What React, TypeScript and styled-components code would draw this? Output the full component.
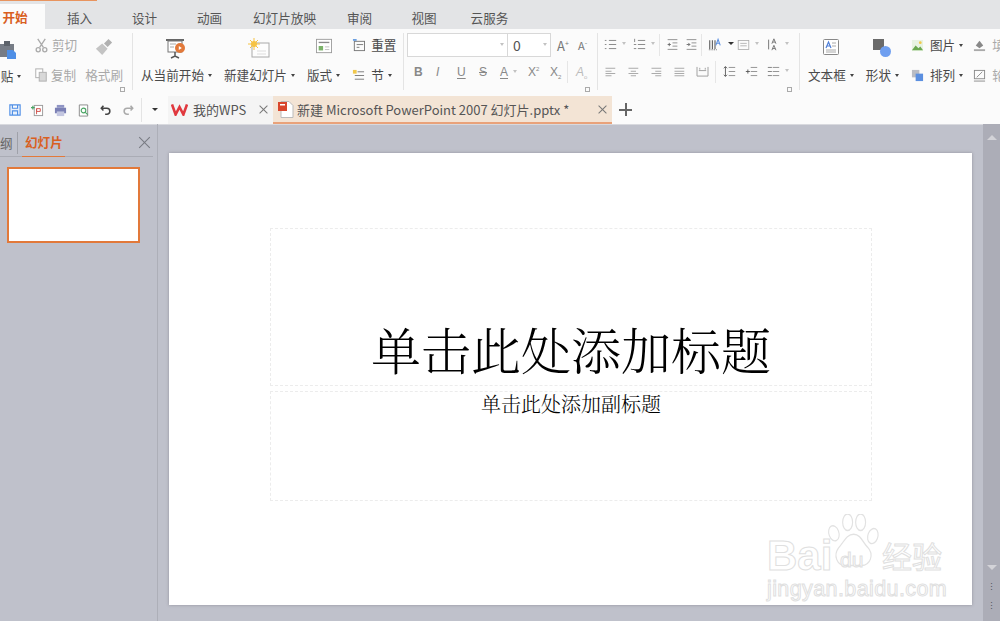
import styled, { createGlobalStyle } from "styled-components";

const cjk = `"Noto Sans CJK SC", "Liberation Sans", sans-serif`;

const GlobalStyle = createGlobalStyle`
  html, body {
    margin: 0;
    padding: 0;
    background: #bfc1cb;
  }
  * {
    box-sizing: border-box;
  }
`;

const menuTabs = [
  { label: "开始", width: 45, active: true },
  { label: "插入", width: 69 },
  { label: "设计", width: 61 },
  { label: "动画", width: 69 },
  { label: "幻灯片放映", width: 81 },
  { label: "审阅", width: 69 },
  { label: "视图", width: 60 },
  { label: "云服务", width: 71 },
];

function Glyph({ size = 16, children }: { size?: number; children: React.ReactNode }) {
  return (
    <svg width={size} height={size} viewBox="0 0 16 16" fill="none">
      {children}
    </svg>
  );
}

const ListIcon = ({ numbered }: { numbered?: boolean }) => (
  <Glyph size={13}>
    <g stroke="#8a8a8a" strokeWidth="1.2">
      <path d="M6 3h9M6 8h9M6 13h9" />
      <path d={numbered ? "M2 1v4M1 8h3M1 13h3" : "M1 3h2M1 8h2M1 13h2"} />
    </g>
  </Glyph>
);

const IndentIcon = ({ flip }: { flip?: boolean }) => (
  <Glyph size={13}>
    <g stroke="#8a8a8a" strokeWidth="1.1">
      <path d="M2 2h12M8 6h6M8 10h6M2 14h12" />
      <path d={flip ? "M6 8H2M4 6v4" : "M2 8h4M4 6l2 2-2 2"} stroke="#666" />
    </g>
  </Glyph>
);

const AlignIcon = ({ kind }: { kind: "left" | "center" | "right" | "full" }) => {
  const short = {
    left: "M2 7h8M2 13h8",
    center: "M5 7h7M5 13h7",
    right: "M7 7h8M7 13h8",
    full: "M2 7h13M2 13h13",
  }[kind];
  return (
    <Glyph size={12}>
      <path d={`M2 3h13M2 10h13 ${short}`} stroke="#999" strokeWidth="1.1" />
    </Glyph>
  );
};

const SpacingIcon = ({ variant }: { variant: number }) => (
  <Glyph size={13}>
    <g stroke="#8a8a8a" strokeWidth="1.1">
      <path d="M7 3h8M7 8h8M7 13h8" />
      {variant === 0 && <path d="M3 2v12M1 4l2-2 2 2M1 12l2 2 2-2" stroke="#555" />}
      {variant === 1 && <path d="M1 8h5M3.500 5.500v5" stroke="#555" />}
      {variant === 2 && <path d="M1 3h5M1 8h5M1 13h5" stroke="#777" />}
    </g>
  </Glyph>
);

export default function App() {
  return (
    <Page>
      <GlobalStyle />
      <MenuBar>
        {menuTabs.map((tab) => (
          <MenuTab key={tab.label} $width={tab.width} $active={tab.active}>
            {tab.label}
          </MenuTab>
        ))}
      </MenuBar>

      <Ribbon>
        <ClipboardGroup>
          <PasteColumn>
            <svg width="22" height="18" viewBox="0 0 22 18">
              <rect x="0" y="3" width="14" height="13" fill="#767c86" />
              <rect x="4" y="0" width="6" height="5" fill="#5c626a" />
              <path d="M7 9h6l3 3v6H7z" fill="#4f8fe6" />
            </svg>
            <LargeLabel>贴<Caret /></LargeLabel>
          </PasteColumn>
          <ClipColumn>
            <ClipRow>
              <svg width="15" height="15" viewBox="0 0 16 16" fill="none" stroke="#aaa" strokeWidth="1.4">
                <path d="M4 1l6 9M12 1L6 10" />
                <circle cx="4.500" cy="12.500" r="2.200" />
                <circle cx="11.500" cy="12.500" r="2.200" />
              </svg>
              <DimLabel>剪切</DimLabel>
            </ClipRow>
            <ClipRow>
              <svg width="14" height="14" viewBox="0 0 16 16" fill="#fff" stroke="#b5b5b5" strokeWidth="1.2">
                <rect x="2" y="1" width="8" height="10" />
                <rect x="6" y="5" width="8" height="10" fill="#d8d8d8" />
              </svg>
              <DimLabel>复制</DimLabel>
            </ClipRow>
          </ClipColumn>
          <BrushColumn>
            <svg width="18" height="18" viewBox="0 0 20 20">
              <path d="M1 12l7-6 6 6-6 7z" fill="#c4c4c4" />
              <path d="M10 6l5-5 4 4-5 5z" fill="#b0b0b0" />
            </svg>
            <DimLabel>格式刷</DimLabel>
          </BrushColumn>
          <Launcher />
        </ClipboardGroup>
        <Divider />

        <SlideGroup>
          <LargeButton>
            <svg width="22" height="22" viewBox="0 0 22 22" fill="none">
              <path d="M1 2h18" stroke="#666" strokeWidth="2" />
              <rect x="3" y="3" width="14" height="11" fill="#fff" stroke="#777" />
              <path d="M10 14v4M6 20l4-2 4 2" stroke="#555" strokeWidth="1.500" />
              <path d="M5 6h6M5 9h4" stroke="#aaa" />
              <circle cx="15" cy="10" r="5" fill="#e2793a" />
              <path d="M13.800 8l3 2-3 2z" fill="#fff" />
            </svg>
            <LargeLabel>从当前开始<Caret /></LargeLabel>
          </LargeButton>
          <LargeButton>
            <svg width="22" height="22" viewBox="0 0 22 22" fill="none">
              <rect x="4" y="5" width="17" height="14" fill="#fdfdfd" stroke="#aaa" />
              <path d="M9 13h9M9 16h9" stroke="#ddd" />
              <circle cx="6" cy="6" r="3" fill="#f6c343" />
              <path d="M6 0v12M0 6h12M2 2l8 8M10 2l-8 8" stroke="#f6c343" />
            </svg>
            <LargeLabel>新建幻灯片<Caret /></LargeLabel>
          </LargeButton>
          <LargeButton>
            <svg width="18" height="16" viewBox="0 0 20 18" fill="none">
              <rect x="1.500" y="1.500" width="17" height="15" fill="#fff" stroke="#999" />
              <path d="M4 5h12" stroke="#888" strokeWidth="1.500" />
              <rect x="4" y="9" width="5" height="5" fill="#7cb36a" />
              <path d="M11 10h5M11 13h5" stroke="#bbb" />
            </svg>
            <LargeLabel>版式<Caret /></LargeLabel>
          </LargeButton>
          <ClipColumn>
            <SmallRow>
              <svg width="13" height="13" viewBox="0 0 14 14" fill="none" stroke="#777">
                <rect x="2.500" y="2.500" width="11" height="10" />
                <path d="M5 6h7M5 9h3" />
                <path d="M1 1h4" stroke="#3f83d8" strokeWidth="1.500" />
              </svg>
              <PlainLabel>重置</PlainLabel>
            </SmallRow>
            <SmallRow>
              <svg width="13" height="13" viewBox="0 0 14 14" fill="none" stroke="#777">
                <rect x="1" y="1" width="4" height="4" fill="#f1c84c" stroke="none" />
                <path d="M6 3h7M3 7h10M3 11h10" />
              </svg>
              <PlainLabel>节<Caret /></PlainLabel>
            </SmallRow>
          </ClipColumn>
        </SlideGroup>
        <Divider />

        <FontGroup>
          <FontFirstRow>
            <FontBox>
              <FontName><SmallCaret /></FontName>
              <FontSize>0<SmallCaret /></FontSize>
            </FontBox>
            <GrowGlyph>A<sup>+</sup></GrowGlyph>
            <GrowGlyph $small>A<sup>-</sup></GrowGlyph>
          </FontFirstRow>
          <FontSecondRow>
            <FormatGlyph $w={22}><b>B</b></FormatGlyph>
            <FormatGlyph $w={21}><i>I</i></FormatGlyph>
            <FormatGlyph $w={22}><u>U</u></FormatGlyph>
            <FormatGlyph $w={21}><s>S</s></FormatGlyph>
            <FormatGlyph $w={28}><u>A</u><SmallCaret /></FormatGlyph>
            <FormatGlyph $w={22}>X<sup>2</sup></FormatGlyph>
            <FormatGlyph $w={17}>X<sub>2</sub></FormatGlyph>
            <ThinRule $gap={8} />
            <FormatGlyph $w={24} $light><i>A</i><sub>o</sub></FormatGlyph>
          </FontSecondRow>
          <Launcher />
        </FontGroup>
        <Divider />

        <ParagraphGroup>
          <ParagraphRow>
            <IconSlot $w={29}><ListIcon /><SmallCaret /></IconSlot>
            <IconSlot $w={26}><ListIcon numbered /><SmallCaret /></IconSlot>
            <ThinRule $gap={6} />
            <IconSlot $w={19}><IndentIcon flip /></IconSlot>
            <IconSlot $w={16}><IndentIcon /></IconSlot>
            <ThinRule $gap={6} />
            <IconSlot $w={29}>
              <svg width="14" height="15" viewBox="0 0 16 16">
                <path d="M2 3v10M5 3v10M8 3v10" stroke="#555" strokeWidth="1.200" />
                <path d="M1 14h9" stroke="#555" strokeDasharray="1 1" />
                <path d="M9 9l2.500-7 2.500 7M10 6.500h3" fill="none" stroke="#5b8fe0" strokeWidth="1.200" />
              </svg>
              <DarkCaret />
            </IconSlot>
            <IconSlot $w={30}>
              <svg width="13" height="12" viewBox="0 0 16 14" fill="none" stroke="#aaa">
                <rect x="1.500" y="1.500" width="13" height="11" />
                <path d="M4 5h8M4 8h8" />
              </svg>
              <SmallCaret />
            </IconSlot>
            <IconSlot $w={30}>
              <svg width="13" height="15" viewBox="0 0 16 16" fill="none" stroke="#777" strokeWidth="1.200">
                <path d="M2 2v12" />
                <path d="M6 7l2.500-6L11 7M7 5h3M6 15l2.500-6 2.500 6M7 13h3" />
              </svg>
              <SmallCaret />
            </IconSlot>
          </ParagraphRow>
          <ParagraphRow>
            <IconSlot $w={23}><AlignIcon kind="left" /></IconSlot>
            <IconSlot $w={23}><AlignIcon kind="center" /></IconSlot>
            <IconSlot $w={23}><AlignIcon kind="right" /></IconSlot>
            <IconSlot $w={23}><AlignIcon kind="full" /></IconSlot>
            <IconSlot $w={19}>
              <svg width="13" height="11" viewBox="0 0 14 12" fill="none" stroke="#999">
                <path d="M1 1v10h12V1M3 5h8M4 2v2M10 2v2" />
              </svg>
            </IconSlot>
            <ThinRule $gap={7} />
            <IconSlot $w={22}><SpacingIcon variant={0} /></IconSlot>
            <IconSlot $w={22}><SpacingIcon variant={1} /></IconSlot>
            <IconSlot $w={30}><SpacingIcon variant={2} /><SmallCaret /></IconSlot>
          </ParagraphRow>
          <Launcher />
        </ParagraphGroup>
        <Divider />

        <InsertGroup>
          <LargeButton>
            <svg width="18" height="18" viewBox="0 0 18 18" fill="none">
              <rect x="1.500" y="1.500" width="15" height="15" rx="1" fill="#fff" stroke="#888" />
              <path d="M4 10l2.500-6L9 10M5 8h3" stroke="#4f7fd8" strokeWidth="1.200" />
              <path d="M10 5h4M10 8h4M4 12h10M4 14h10" stroke="#aaa" />
            </svg>
            <LargeLabel>文本框<Caret /></LargeLabel>
          </LargeButton>
          <LargeButton>
            <svg width="20" height="20" viewBox="0 0 20 20">
              <rect x="1" y="1" width="11" height="11" fill="#6a6a6a" />
              <circle cx="13.500" cy="13.500" r="5.500" fill="#6f9ff0" />
            </svg>
            <LargeLabel>形状<Caret /></LargeLabel>
          </LargeButton>
          <ClipColumn>
            <SmallRow>
              <svg width="13" height="13" viewBox="0 0 14 14">
                <rect x="1" y="1" width="12" height="12" fill="#e8f3e2" />
                <path d="M1 12l4-5 3 3 2-2 3 4z" fill="#6aa84f" />
                <circle cx="10" cy="4" r="1.500" fill="#f1c84c" />
              </svg>
              <PlainLabel>图片<Caret /></PlainLabel>
            </SmallRow>
            <SmallRow>
              <svg width="13" height="13" viewBox="0 0 14 14">
                <rect x="1" y="1" width="8" height="8" fill="#b9bcc4" />
                <rect x="5" y="5" width="8" height="8" fill="#5b8fe0" />
              </svg>
              <PlainLabel>排列<Caret /></PlainLabel>
            </SmallRow>
          </ClipColumn>
          <ClippedColumn>
            <SmallRow>
              <svg width="13" height="13" viewBox="0 0 14 14">
                <path d="M3 7l4-5 4 5-4 3z" fill="#888" />
                <path d="M1 12h12" stroke="#aaa" strokeWidth="2" />
              </svg>
              <DimLabel>填充</DimLabel>
            </SmallRow>
            <SmallRow>
              <svg width="13" height="13" viewBox="0 0 14 14" fill="none" stroke="#888">
                <rect x="1.500" y="1.500" width="11" height="9" />
                <path d="M4 9l6-6M1 13h12" />
              </svg>
              <DimLabel>轮廓</DimLabel>
            </SmallRow>
          </ClippedColumn>
        </InsertGroup>
      </Ribbon>

      <DocBar>
        <QuickTools>
          <svg width="12" height="12" viewBox="0 0 14 14" fill="#e8f0fb" stroke="#4f8fe6" strokeWidth="1.300">
            <path d="M1 1h12v12H1zM4 1v4h6V1M4 13V8h6v5" />
          </svg>
          <svg width="13" height="13" viewBox="0 0 14 14" fill="none" stroke="#d0504a">
            <rect x="3.500" y="1.500" width="9" height="11" fill="#fff" stroke="#999" />
            <path d="M6 5h4v3H6zM6 5v6" />
            <path d="M0 4h4M2 2v4" stroke="#4aa564" strokeWidth="1.300" />
          </svg>
          <svg width="13" height="13" viewBox="0 0 14 14">
            <rect x="3" y="1" width="8" height="3" fill="#8f94c4" />
            <rect x="1" y="4" width="12" height="6" fill="#7b80b5" />
            <rect x="3" y="8" width="8" height="5" fill="#c3c6e0" />
          </svg>
          <svg width="13" height="13" viewBox="0 0 14 14" fill="none">
            <path d="M2.500 1h9v12h-9z" fill="#fff" stroke="#888" />
            <circle cx="7" cy="7" r="2.500" stroke="#4aa564" strokeWidth="1.200" />
            <path d="M9 9l2.500 2.500" stroke="#4aa564" strokeWidth="1.200" />
          </svg>
          <svg width="12" height="12" viewBox="0 0 14 14" fill="none" stroke="#444" strokeWidth="1.800">
            <path d="M4 2L1.500 5 4 7.500M2 5h6a3.500 3.500 0 0 1 0 7H6" />
          </svg>
          <svg width="12" height="12" viewBox="0 0 14 14" fill="none" stroke="#aaa" strokeWidth="1.800">
            <path d="M10 2l2.500 3L10 7.500M12 5H6a3.500 3.500 0 0 0 0 7h2" />
          </svg>
          <QuickRule />
          <QuickCaret />
        </QuickTools>
        <DocTab $width={105}>
          <svg width="17" height="13" viewBox="0 0 17 13">
            <path d="M1 1.500l3.600 10L8.500 4l3.900 7.500L16 1.500" fill="none" stroke="#e0383e" strokeWidth="2.600" />
          </svg>
          <DocTitle>我的WPS</DocTitle>
          <CloseMark />
        </DocTab>
        <DocTab $width={339} $active>
          <svg width="16" height="17" viewBox="0 0 16 17">
            <path d="M3 0.500h8l4 4v12H3z" fill="#fff" stroke="#bbb" />
            <rect x="0" y="1" width="9" height="9" fill="#d9462c" />
            <rect x="2" y="3" width="5" height="1.500" fill="#fff" />
          </svg>
          <DocTitle>新建 Microsoft PowerPoint 2007 幻灯片.pptx *</DocTitle>
          <CloseMark />
        </DocTab>
        <PlusMark />
      </DocBar>

      <Workspace>
        <Sidebar>
          <SideTabs>
            <OutlineTab>纲</OutlineTab>
            <SlidesTab>幻灯片</SlidesTab>
            <SideClose />
          </SideTabs>
          <Thumbnail />
        </Sidebar>
        <Stage>
          <Slide>
            <TitleBox>单击此处添加标题</TitleBox>
            <SubtitleBox>单击此处添加副标题</SubtitleBox>
          </Slide>
          <Watermark>
            <svg width="55" height="57" viewBox="0 0 72 62" preserveAspectRatio="none" fill="#fff" stroke="#e2e2e2" strokeWidth="1.500">
              <ellipse cx="9" cy="21" rx="6.500" ry="8.500" transform="rotate(-25 9 21)" />
              <ellipse cx="27" cy="9" rx="6.500" ry="9" />
              <ellipse cx="44" cy="9" rx="6.500" ry="9" />
              <ellipse cx="60" cy="24" rx="6.500" ry="8.500" transform="rotate(25 60 24)" />
              <path d="M35 22c9 0 12 9 18 14 9 8 4 20-8 20H24c-11 0-16-11-9-19 7-6 10-15 20-15z" />
            </svg>
            <BaiduWord>Bai</BaiduWord>
            <DuWord>du</DuWord>
            <JingyanWord>经验</JingyanWord>
            <DomainWord>jingyan.baidu.com</DomainWord>
          </Watermark>
        </Stage>
        <ScrollRail>
          <RailArrow />
          <RailFoot>
            <RailArrow $down />
            <RailDots>⋮</RailDots>
            <RailDots>⋮</RailDots>
          </RailFoot>
        </ScrollRail>
      </Workspace>
    </Page>
  );
}

const Page = styled.div`
  width: 1000px;
  height: 621px;
  overflow: hidden;
  display: flex;
  flex-direction: column;
  font-family: ${cjk};
  background: #bfc1cb;
`;

const MenuBar = styled.nav`
  height: 29px;
  flex: none;
  display: flex;
  background: #e3e4e6;
  position: relative;

  &::before {
    content: "";
    position: absolute;
    top: 0;
    left: 0;
    width: 97px;
    height: 1px;
    background: #e8945f;
  }
`;

const MenuTab = styled.div<{ $width: number; $active?: boolean }>`
  width: ${(p) => p.$width}px;
  display: flex;
  align-items: center;
  justify-content: center;
  padding-right: ${(p) => (p.$active ? 15 : 0)}px;
  font-size: 12.6px;
  color: ${(p) => (p.$active ? "#d9601f" : "#555")};
  font-weight: ${(p) => (p.$active ? 700 : 400)};
  background: ${(p) => (p.$active ? "#fbfbfb" : "transparent")};
  margin-top: ${(p) => (p.$active ? 4 : 6)}px;
`;

const Ribbon = styled.div`
  height: 67px;
  flex: none;
  display: flex;
  align-items: stretch;
  background: #fbfbfb;
  color: #555;
`;

const Group = styled.section`
  position: relative;
  display: flex;
  flex: none;
`;

const ClipboardGroup = styled(Group)`
  width: 132px;
  padding-top: 4px;
`;

const SlideGroup = styled(Group)`
  width: 270px;
  padding: 4px 0 0 8px;
  gap: 12px;
`;

const FontGroup = styled(Group)`
  width: 193px;
  flex-direction: column;
  padding: 4px 0 0 3px;
`;

const ParagraphGroup = styled(Group)`
  width: 201px;
  flex-direction: column;
  padding: 5px 0 0 3px;
`;

const InsertGroup = styled(Group)`
  flex: 1;
  overflow: hidden;
  padding: 4px 0 0 8px;
  gap: 12px;
`;

const Divider = styled.div`
  width: 1px;
  flex: none;
  margin: 4px 0 6px;
  background: #e4e4e4;
`;

const PasteColumn = styled.div`
  width: 30px;
  margin-left: -4px;
  display: flex;
  flex-direction: column;
  align-items: center;
  gap: 8px;
  padding-top: 8px;
`;

const ClipColumn = styled.div`
  display: flex;
  flex-direction: column;
  gap: 12px;
  padding-top: 3px;
`;

const ClippedColumn = styled(ClipColumn)`
  margin-left: -2px;
`;

const ClipRow = styled.div`
  display: flex;
  align-items: center;
  gap: 3px;
  margin-left: 8px;
  height: 18px;
`;

const SmallRow = styled.div`
  display: flex;
  align-items: center;
  gap: 6px;
  height: 18px;
`;

const BrushColumn = styled.div`
  display: flex;
  flex-direction: column;
  align-items: center;
  gap: 10px;
  margin-left: 8px;
  padding-top: 5px;
`;

const LargeButton = styled.div`
  display: flex;
  flex-direction: column;
  align-items: center;
  justify-content: space-between;
  height: 51px;
  padding-top: 5px;
`;

const LargeLabel = styled.span`
  font-size: 12.6px;
  line-height: 18px;
  color: #4a4a4a;
  white-space: nowrap;
`;

const PlainLabel = styled(LargeLabel)``;

const DimLabel = styled.span`
  font-size: 12.6px;
  line-height: 18px;
  color: #a9a9a9;
  white-space: nowrap;
`;

const Caret = styled.i`
  display: inline-block;
  vertical-align: middle;
  margin: -2px 0 0 4px;
  border-left: 2.5px solid transparent;
  border-right: 2.5px solid transparent;
  border-top: 3px solid #444;
`;

const SmallCaret = styled(Caret)`
  border-top-color: #c2c2c2;
  margin-left: 5px;
`;

const DarkCaret = styled(Caret)`
  border-top-color: #333;
  margin-left: 6px;
  border-left-width: 3px;
  border-right-width: 3px;
`;

const QuickCaret = styled(DarkCaret)`
  margin-left: 0;
`;

const Launcher = styled.span`
  position: absolute;
  right: 7px;
  bottom: 4px;
  width: 5px;
  height: 5px;
  border: 1px solid #aaa;
`;

const FontFirstRow = styled.div`
  display: flex;
  align-items: center;
  height: 24px;
`;

const FontBox = styled.div`
  display: flex;
  width: 144px;
  height: 24px;
  border: 1px solid #d8d8d8;
  background: #fff;
`;

const FontName = styled.div`
  width: 100px;
  border-right: 1px solid #d8d8d8;
  display: flex;
  align-items: center;
  justify-content: flex-end;
  padding-right: 3px;
`;

const FontSize = styled.div`
  flex: 1;
  display: flex;
  align-items: center;
  justify-content: space-between;
  padding: 0 3px 0 5px;
  font-size: 14px;
  color: #555;
`;

const GrowGlyph = styled.span<{ $small?: boolean }>`
  width: ${(p) => (p.$small ? 19 : 20)}px;
  text-align: center;
  margin-left: ${(p) => (p.$small ? 0 : 2)}px;
  font-size: ${(p) => (p.$small ? 11 : 13)}px;
  color: #777;

  sup {
    font-size: 7px;
    vertical-align: 5px;
    line-height: 0;
  }
`;

const FontSecondRow = styled.div`
  display: flex;
  align-items: center;
  height: 22px;
  margin-top: 4px;
  padding-left: 7px;
`;

const FormatGlyph = styled.span<{ $w: number; $light?: boolean }>`
  width: ${(p) => p.$w}px;
  flex: none;
  font: 500 12px "Liberation Sans", sans-serif;
  color: ${(p) => (p.$light ? "#bbb" : "#888")};
  white-space: nowrap;

  u {
    text-underline-offset: 2px;
  }
  sup, sub {
    font-size: 6px;
    line-height: 0;
  }
`;

const ThinRule = styled.span<{ $gap: number }>`
  width: 1px;
  height: 22px;
  flex: none;
  margin-right: ${(p) => p.$gap}px;
  background: #e6e6e6;
`;

const ParagraphRow = styled.div`
  display: flex;
  align-items: center;
  height: 21px;
  margin-bottom: 6px;
  padding-left: 3px;
`;

const IconSlot = styled.span<{ $w: number }>`
  width: ${(p) => p.$w}px;
  display: flex;
  align-items: center;
  flex: none;
`;

const DocBar = styled.div`
  height: 28px;
  flex: none;
  display: flex;
  align-items: stretch;
  background: #fbfbfb;
`;

const QuickTools = styled.div`
  width: 168px;
  flex: none;
  display: flex;
  align-items: center;
  gap: 10px;
  padding: 0 0 0 9px;
`;

const QuickRule = styled.span`
  width: 1px;
  height: 24px;
  background: #e4e4e4;
  margin-left: -3px;
`;

const DocTab = styled.div<{ $width: number; $active?: boolean }>`
  width: ${(p) => p.$width}px;
  flex: none;
  display: flex;
  align-items: center;
  gap: ${(p) => (p.$active ? 3 : 5)}px;
  padding: 0 5px 0 ${(p) => (p.$active ? 5 : 3)}px;
  background: ${(p) => (p.$active ? "#f3e4d5" : "#f4f4f4")};
  border-bottom: 2px solid ${(p) => (p.$active ? "#e9a27a" : "transparent")};
`;

const DocTitle = styled.span`
  flex: 1;
  font-size: 13px;
  color: #555;
  white-space: nowrap;
`;

const CloseMark = styled.span`
  position: relative;
  width: 9px;
  height: 9px;
  flex: none;

  &::before,
  &::after {
    content: "";
    position: absolute;
    left: 4px;
    top: -1px;
    width: 1px;
    height: 11px;
    background: #777;
    transform: rotate(45deg);
  }
  &::after {
    transform: rotate(-45deg);
  }
`;

const PlusMark = styled.span`
  position: relative;
  width: 13px;
  height: 13px;
  margin: 7px 0 0 7px;

  &::before,
  &::after {
    content: "";
    position: absolute;
    background: #666;
  }
  &::before {
    left: 0;
    right: 0;
    top: 5.5px;
    height: 2px;
  }
  &::after {
    top: 0;
    bottom: 0;
    left: 5.5px;
    width: 2px;
  }
`;

const Workspace = styled.main`
  flex: 1;
  display: flex;
  min-height: 0;
  background: #bfc1cb;
  box-shadow: inset 0 1px 0 #d8d9de;
`;

const Sidebar = styled.aside`
  width: 158px;
  flex: none;
  border-right: 1px solid #adafb8;
  padding: 4px 4px 0 0;
`;

const SideTabs = styled.div`
  position: relative;
  height: 29px;
  display: flex;
  align-items: stretch;
  border-bottom: 1px solid #aaacb5;
`;

const OutlineTab = styled.span`
  width: 18px;
  height: 22px;
  flex: none;
  margin-top: 4px;
  font-size: 12.6px;
  line-height: 21px;
  color: #666;
  text-align: right;
  padding-right: 7px;
  border-right: 1px solid #9fa1a9;
`;

const SlidesTab = styled.span`
  height: 29px;
  margin-left: 4px;
  padding: 0 2px 0 3px;
  font-size: 12.6px;
  font-weight: 700;
  line-height: 28px;
  color: #d9601f;
  border-bottom: 1px solid #e2793a;
`;

const SideClose = styled(CloseMark)`
  position: absolute;
  right: 3px;
  top: 9px;
  width: 11px;
  height: 11px;

  &::before,
  &::after {
    left: 5px;
    top: -2px;
    height: 15px;
    background: #777a82;
  }
`;

const Thumbnail = styled.div`
  width: 133px;
  height: 76px;
  margin: 10px 0 0 7px;
  background: #fff;
  border: 2px solid #e2793a;
`;

const Stage = styled.div`
  position: relative;
  flex: 1;
  padding: 29px 11px 0 11px;
`;

const Slide = styled.div`
  width: 803px;
  height: 452px;
  background: #fff;
  box-shadow: 0 0 3px rgba(90, 90, 100, 0.45);
  padding: 75px 101px 0;
  display: flex;
  flex-direction: column;
  gap: 5px;
`;

const PlaceholderBox = styled.div`
  width: 602px;
  border: 1px dashed #ececec;
  text-align: center;
  font-family: "Noto Serif CJK SC", "Liberation Serif", serif;
  font-weight: 300;
  color: #000;
  white-space: nowrap;
`;

const TitleBox = styled(PlaceholderBox)`
  height: 158px;
  display: flex;
  align-items: flex-end;
  justify-content: center;
  padding-bottom: 5px;
  font-size: 50px;
  line-height: 64px;
`;

const SubtitleBox = styled(PlaceholderBox)`
  height: 110px;
  font-size: 20px;
  line-height: 24px;
`;

const Watermark = styled.div`
  position: absolute;
  left: 609px;
  top: 390px;
  width: 190px;
  height: 90px;

  svg {
    position: absolute;
    left: 60px;
    top: 0;
  }
`;

const OutlineWord = styled.span`
  position: absolute;
  font-family: "Liberation Sans", sans-serif;
  color: #fff;
  -webkit-text-stroke: 1px #e0e0e0;
  white-space: nowrap;
`;

const BaiduWord = styled(OutlineWord)`
  left: 0;
  top: 20px;
  font-size: 42px;
  line-height: 44px;
  font-weight: 700;
`;

const DuWord = styled(OutlineWord)`
  left: 73px;
  top: 34px;
  font-size: 21px;
  line-height: 24px;
`;

const JingyanWord = styled(OutlineWord)`
  left: 115px;
  top: 24px;
  font-family: ${cjk};
  font-size: 30px;
  line-height: 34px;
`;

const DomainWord = styled(OutlineWord)`
  left: 0;
  top: 62px;
  font-size: 21.500px;
  line-height: 26px;
  letter-spacing: 0.4px;
`;

const ScrollRail = styled.div`
  width: 17px;
  flex: none;
  display: flex;
  flex-direction: column;
  justify-content: space-between;
  align-items: center;
  background: #acadb7;
  padding: 11px 0 8px;
`;

const RailArrow = styled.span<{ $down?: boolean }>`
  width: 0;
  height: 0;
  border-left: 5px solid transparent;
  border-right: 5px solid transparent;
  border-${(p) => (p.$down ? "top" : "bottom")}: 5px solid #d3d3d8;
`;

const RailFoot = styled.div`
  display: flex;
  flex-direction: column;
  align-items: center;
  gap: 4px;
`;

const RailDots = styled.span`
  font-size: 9px;
  line-height: 15px;
  color: #55565e;

  ${RailArrow} + & {
    margin-top: 5px;
  }
`;
